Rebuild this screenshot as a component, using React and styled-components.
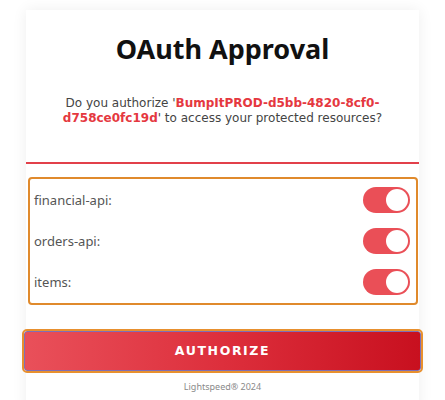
import React, { useState } from 'react';
import styled, { createGlobalStyle } from 'styled-components';

const GlobalStyle = createGlobalStyle`
  html, body {
    margin: 0;
    background: #ffffff;
    font-family: "Noto Sans", "DejaVu Sans", sans-serif;
  }
`;

const Page = styled.div`
  width: 445px;
  height: 400px;
  overflow: hidden;
  padding-top: 10px;
  box-sizing: border-box;
`;

const Card = styled.div`
  width: 393px;
  margin: 0 auto;
  min-height: 400px;
  background: #fff;
  box-shadow: 0 0 14px rgba(0, 0, 0, 0.07);
`;

const Header = styled.div`
  border-bottom: 2px solid #e2404a;
  padding: 22px 0 36px;
  text-align: center;
`;

const Title = styled.h1`
  margin: 0;
  font-size: 27px;
  font-weight: 700;
  color: #111;
  line-height: 34px;
`;

const Prompt = styled.p`
  margin: 30px auto 0;
  width: 322px;
  font-family: "DejaVu Sans", sans-serif;
  font-size: 12px;
  line-height: 15px;
  color: #444;
`;

const ClientId = styled.strong`
  color: #e5383f;
  font-weight: 700;
`;

const Scopes = styled.div`
  margin: 13px 1px 0 2px;
  border: 2px solid #e08a2c;
  border-radius: 4px;
  padding: 0 6px 0 4px;
`;

const Row = styled.div`
  display: flex;
  align-items: center;
  justify-content: space-between;
  height: 41.3px;
`;

const Label = styled.span`
  font-size: 13px;
  color: #555;
`;

const Toggle = styled.button`
  width: 47px;
  height: 26px;
  border: none;
  border-radius: 13px;
  padding: 2px;
  background: ${(p) => (p.$on ? '#ea4f57' : '#ccc')};
  display: flex;
  justify-content: ${(p) => (p.$on ? 'flex-end' : 'flex-start')};
  cursor: pointer;
`;

const Knob = styled.span`
  width: 22px;
  height: 22px;
  border-radius: 50%;
  background: #fff;
`;

const AuthButton = styled.button`
  display: block;
  width: 397px;
  margin: 26px 0 0 -2px;
  height: 40px;
  border: 1px solid #7f6fb4;
  border-radius: 3px;
  outline: 2px solid #e8902e;
  background: linear-gradient(90deg, #e9505a 0%, #dd2f3c 50%, #c8101f 100%);
  color: #fff;
  font-family: "DejaVu Sans", sans-serif;
  font-weight: 700;
  font-size: 12.5px;
  letter-spacing: 1.6px;
  cursor: pointer;
`;

const Footer = styled.div`
  margin-top: 9px;
  text-align: center;
  font-size: 9px;
  color: #8a8a8a;
`;

const scopes = ['financial-api', 'orders-api', 'items'];

export default function App() {
  const [enabled, setEnabled] = useState({ 'financial-api': true, 'orders-api': true, items: true });

  return (
    <Page>
      <GlobalStyle />
      <Card>
        <Header>
          <Title>OAuth Approval</Title>
          <Prompt>
            Do you authorize '<ClientId>BumpItPROD-d5bb-4820-8cf0-</ClientId>
            <br />
            <ClientId>d758ce0fc19d</ClientId>' to access your protected resources?
          </Prompt>
        </Header>
        <Scopes>
          {scopes.map((s) => (
            <Row key={s}>
              <Label>{s}:</Label>
              <Toggle $on={enabled[s]} onClick={() => setEnabled({ ...enabled, [s]: !enabled[s] })}>
                <Knob />
              </Toggle>
            </Row>
          ))}
        </Scopes>
        <AuthButton>AUTHORIZE</AuthButton>
        <Footer>Lightspeed® 2024</Footer>
      </Card>
    </Page>
  );
}
